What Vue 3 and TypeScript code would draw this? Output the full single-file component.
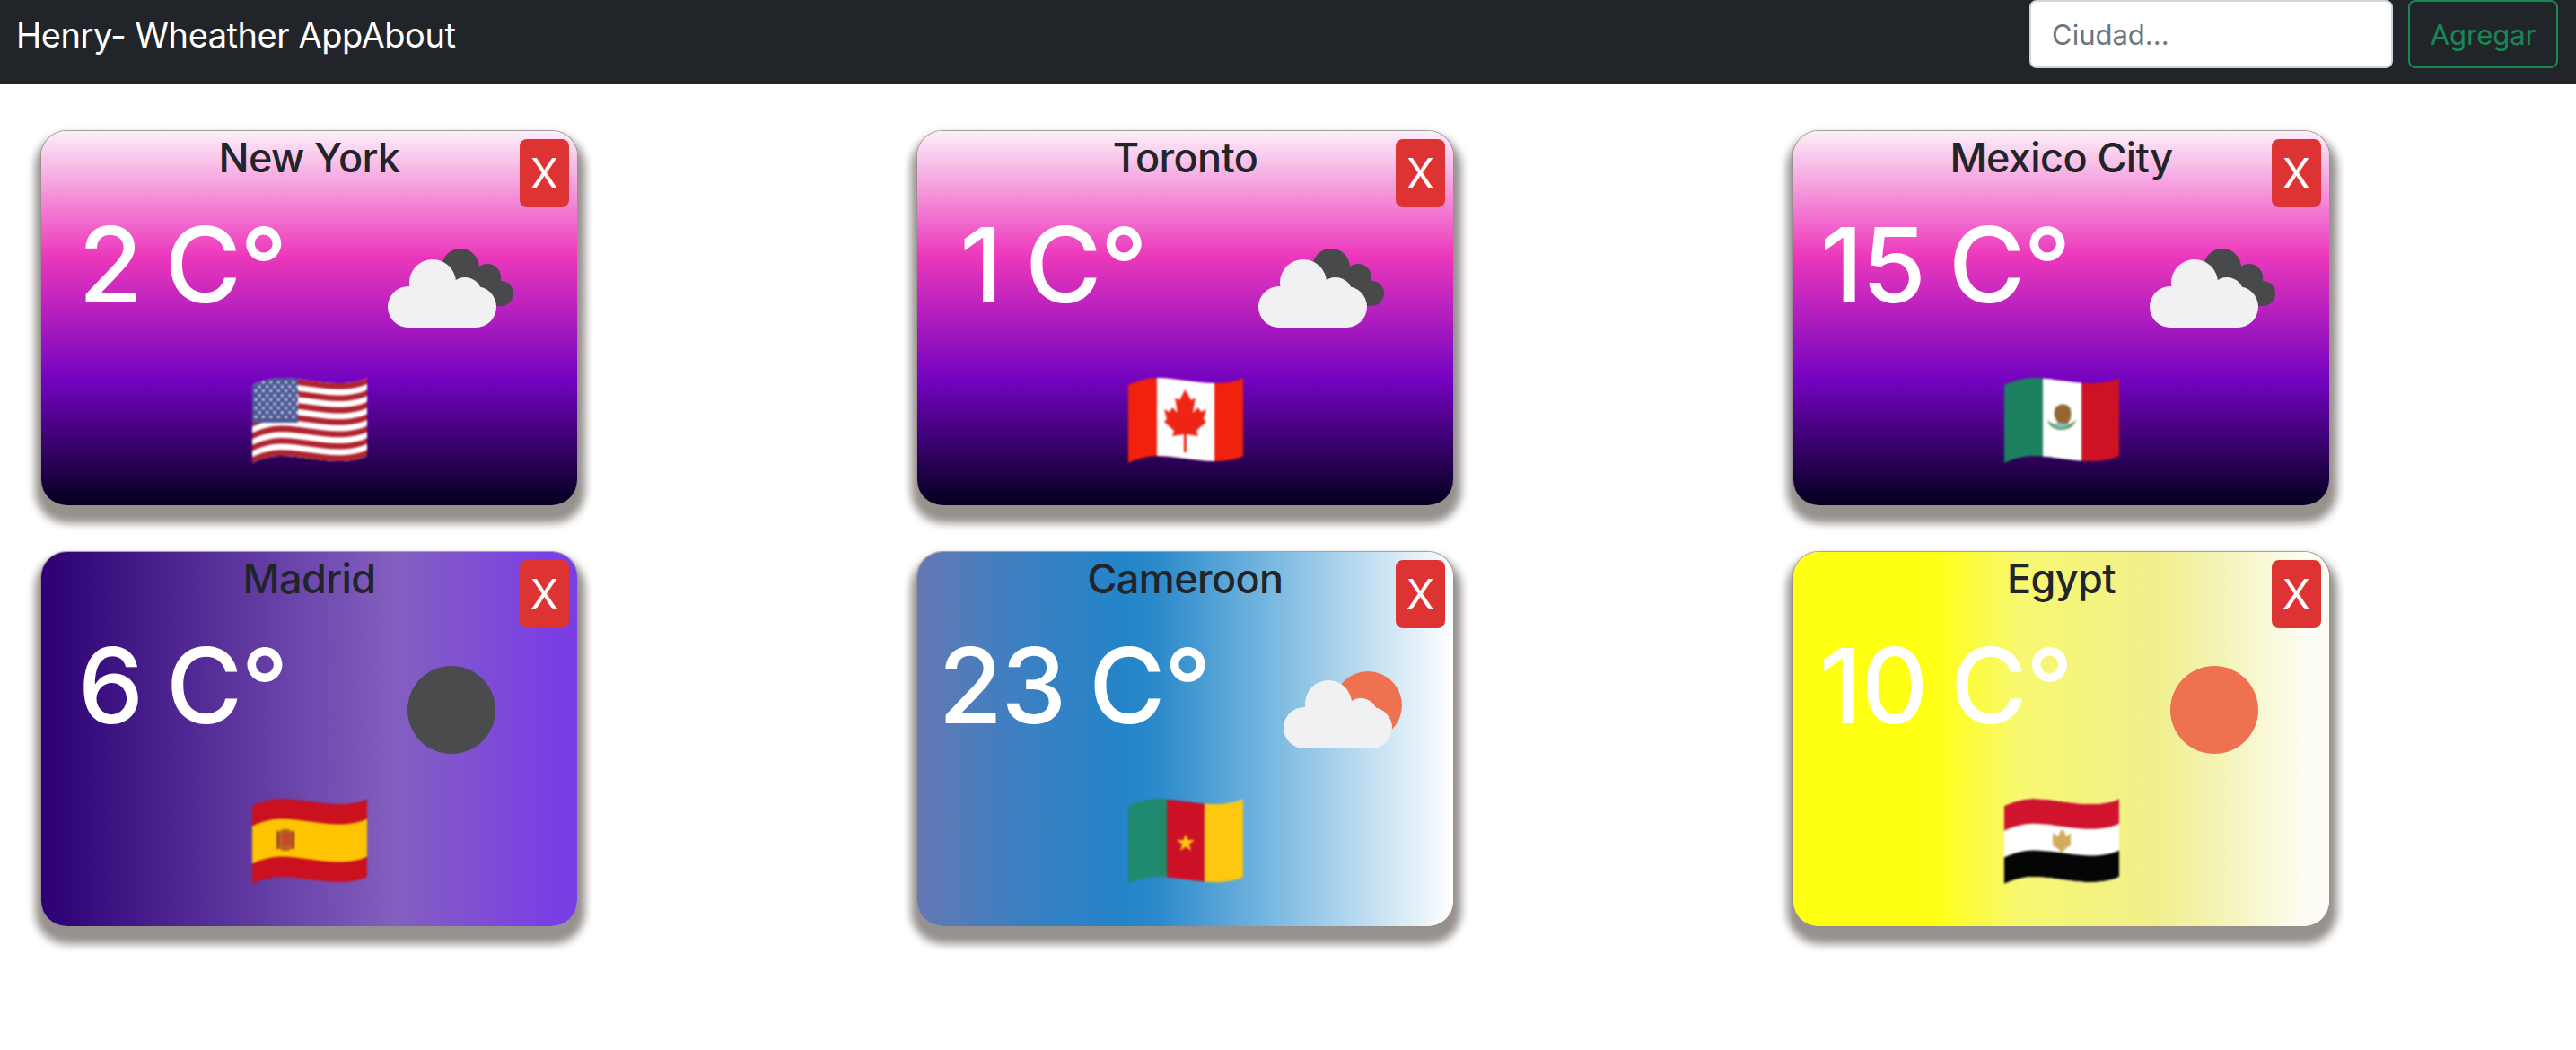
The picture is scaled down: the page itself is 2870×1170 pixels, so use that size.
<template>
  <div class="page">
    <nav class="navbar">
      <div class="brand">Henry- Wheather App<span>About</span></div>
      <form class="search" @submit.prevent>
        <input class="search-input" type="text" placeholder="Ciudad..." />
        <button class="search-btn" type="submit">Agregar</button>
      </form>
    </nav>

    <div class="cards">
      <div v-for="city in cities" :key="city.name" class="card" :class="city.theme">
        <button class="close-btn">X</button>
        <h2 class="card-title">{{ city.name }}</h2>
        <div class="card-row">
          <span class="temp">{{ city.temp }} C°</span>
          <svg class="weather" :viewBox="city.icon.startsWith('clouds') ? '-4 0 200 200' : '-1 0 200 200'" width="200" height="200">
            <template v-if="city.icon === 'clouds-night'">
              <circle cx="107" cy="76" r="21" fill="#48494b" />
              <circle cx="137" cy="87" r="15" fill="#48494b" />
              <circle cx="152" cy="105" r="14" fill="#48494b" />
              <rect x="107" y="84" width="45" height="35" fill="#48494b" />
            </template>
            <circle v-if="city.icon === 'clouds-day'" cx="125" cy="95" r="38" fill="#ee7150" />
            <g v-if="city.icon.startsWith('clouds')" :transform="city.icon === 'clouds-day' ? 'translate(5 0)' : ''" fill="#f1f1f3">
              <circle cx="76" cy="93" r="26" />
              <circle cx="112" cy="106" r="19" />
              <circle cx="49" cy="120" r="23" />
              <circle cx="124" cy="120" r="23" />
              <rect x="49" y="100" width="75" height="43" />
            </g>
            <circle v-if="city.icon === 'clear-night'" cx="100" cy="100" r="49" fill="#4a4b4d" />
            <circle v-if="city.icon === 'clear-day'" cx="100" cy="100" r="49" fill="#ee7150" />
          </svg>
        </div>
        <svg class="flag" viewBox="0 0 128 95" width="128" height="95">
          <clipPath :id="'wave-' + city.flag">
            <path :d="band(0, 1)" />
          </clipPath>
          <g :clip-path="'url(#wave-' + city.flag + ')'">
            <template v-if="city.flag === 'us'">
              <rect width="128" height="95" fill="#fff" />
              <path v-for="i in 7" :key="i" :d="band(((i - 1) * 2) / 13, ((i - 1) * 2 + 1) / 13)" fill="#b0232f" />
              <g>
                <rect width="51" height="50" fill="#4b5a96" />
                <circle v-for="s in stars" :key="s.x + '-' + s.y" :cx="s.x" :cy="s.y" r="1.5" fill="#e4e6f2" />
              </g>
            </template>
            <template v-else-if="city.flag === 'ca'">
              <rect width="128" height="95" fill="#f0220e" />
              <rect x="32" width="64" height="95" fill="#fff" />
              <polygon points="63.5,13 57,25 52,22 55,39 49,33 46,38 40,35 43,46 40,49 51,59 49,65 62,63 62,83 65,83 65,63 78,65 76,59 87,49 84,46 87,35 81,38 78,33 72,39 75,22 70,25" fill="#ee2414" />
            </template>
            <template v-else-if="city.flag === 'mx'">
              <rect width="43" height="95" fill="#1d8060" />
              <rect x="43" width="43" height="95" fill="#fff" />
              <rect x="86" width="42" height="95" fill="#cf1126" />
              <path d="M56 36 C58 28 72 27 74 36 C76 44 72 52 66 54 C60 52 54 44 56 36Z" fill="#96662f" />
              <path d="M48 46 C50 62 78 62 80 46 C76 55 52 55 48 46Z" fill="#5f9a62" />
              <ellipse cx="63" cy="53" rx="8" ry="3" fill="#7fb9c4" />
            </template>
            <template v-else-if="city.flag === 'es'">
              <rect width="128" height="95" fill="#cb1020" />
              <path :d="band(0.26, 0.74)" fill="#fec400" />
              <rect x="30" y="34" width="14" height="24" rx="5" fill="#b5651d" />
              <rect x="34" y="38" width="8" height="14" fill="#c8452c" />
              <rect x="27" y="36" width="3" height="20" fill="#a8452c" />
              <rect x="44" y="36" width="3" height="20" fill="#a8452c" />
            </template>
            <template v-else-if="city.flag === 'cm'">
              <rect width="43" height="95" fill="#1f8a6e" />
              <rect x="43" width="42" height="95" fill="#cc1126" />
              <rect x="85" width="43" height="95" fill="#fdc80f" />
              <polygon points="64,39 66.5,46 74,46 68,50.5 70,58 64,53.5 58,58 60,50.5 54,46 61.5,46" fill="#fdc80f" />
            </template>
            <template v-else>
              <rect width="128" height="95" fill="#fff" />
              <path :d="band(0, 0.32)" fill="#d0142e" />
              <path :d="band(0.66, 1)" fill="#050505" />
              <path d="M54 38 L60 42 L63 35 L66 35 L69 42 L74 38 L74 52 L69 55 L64 60 L59 55 L54 52Z" fill="#d2ab5e" />
            </template>
          </g>
        </svg>
      </div>
    </div>
  </div>
</template>

<script setup lang="ts">
interface City {
  name: string
  temp: number
  theme: string
  icon: string
  flag: string
}

const cities: City[] = [
  { name: 'New York', temp: 2, theme: 'night', icon: 'clouds-night', flag: 'us' },
  { name: 'Toronto', temp: 1, theme: 'night', icon: 'clouds-night', flag: 'ca' },
  { name: 'Mexico City', temp: 15, theme: 'night', icon: 'clouds-night', flag: 'mx' },
  { name: 'Madrid', temp: 6, theme: 'violet', icon: 'clear-night', flag: 'es' },
  { name: 'Cameroon', temp: 23, theme: 'blue', icon: 'clouds-day', flag: 'cm' },
  { name: 'Egypt', temp: 10, theme: 'yellow', icon: 'clear-day', flag: 'eg' }
]

// stars of the canton, offset every other row
const stars: { x: number; y: number }[] = []
for (let row = 0; row < 9; row++) {
  for (let col = 0; col < 6; col++) {
    stars.push({ x: 4 + col * 8.4 + (row % 2) * 4.2, y: 5 + row * 4.8 })
  }
}

// horizontal strip that follows the wave of the flag, a and b from 0 to 1
function band(a: number, b: number): string {
  const t = a * 87
  const u = b * 87
  return (
    `M0 ${t + 8} C10 ${t + 3} 22 ${t} 32 ${t} C54 ${t} 74 ${t + 6} 96 ${t + 6} C108 ${t + 6} 120 ${t + 4} 128 ${t} ` +
    `L128 ${u} C120 ${u + 4} 108 ${u + 6} 96 ${u + 6} C74 ${u + 6} 54 ${u} 32 ${u} C22 ${u} 10 ${u + 3} 0 ${u + 8} Z`
  )
}
</script>

<style>
html,
body {
  margin: 0;
  background: #fff;
}
</style>

<style scoped>
.page {
  min-height: 1170px;
  font-family: Inter, "Liberation Sans", sans-serif;
  color: #212529;
}

.navbar {
  display: flex;
  justify-content: space-between;
  align-items: flex-start;
  height: 94px;
  padding: 0 20px 0 18px;
  background: #212529;
}

.brand {
  color: #fff;
  font-size: 38px;
  letter-spacing: -0.45px;
  line-height: 78px;
}

.search {
  display: flex;
  gap: 17px;
}

.search-input {
  box-sizing: border-box;
  width: 405px;
  height: 76px;
  padding: 0 23px;
  border: 2px solid #ced4da;
  border-radius: 8px;
  background: #fff;
  font-family: inherit;
  font-size: 31px;
  color: #212529;
}

.search-input::placeholder {
  color: #6c757d;
  opacity: 1;
}

.search-btn {
  box-sizing: border-box;
  width: 167px;
  height: 76px;
  border: 2px solid #198754;
  border-radius: 8px;
  background: transparent;
  color: #198754;
  font-family: inherit;
  font-size: 31px;
}

.cards {
  display: grid;
  grid-template-columns: repeat(3, 597px);
  column-gap: 379px;
  row-gap: 52px;
  padding: 52px 0 0 46px;
}

.card {
  position: relative;
  box-sizing: border-box;
  height: 417px;
  border-radius: 28px;
  box-shadow: 1px 12px 10px 8px #96918d, 0 0 0 1px #a8a4a2;
}

.night {
  background: linear-gradient(to top, #03001e, #7303c0, #ec38bc, #fdeff9);
}

.violet {
  background: linear-gradient(to right, #2c0073, #8460c0 66%, #7a3fe4 95%);
}

.blue {
  background: linear-gradient(to right, #6478b4, #3a80c2 20%, #2484c8 38%, #2c8acb 45%, #78b8e0 66%, #fff);
}

.yellow {
  background: linear-gradient(to right, #ffff14 26%, #f8f870 42%, #f0ef8d 68%, #f4f4b8 80%, #fdfdf5 96%);
}

.close-btn {
  position: absolute;
  top: 9px;
  right: 9px;
  width: 55px;
  height: 76px;
  padding: 0;
  border: none;
  border-radius: 8px;
  background: #dd3333;
  color: #fff;
  font-family: inherit;
  font-size: 46px;
}

.card-title {
  height: 76px;
  margin: 0;
  font-size: 45px;
  font-weight: 500;
  letter-spacing: -0.6px;
  line-height: 60px;
  text-align: center;
}

.card-row {
  display: flex;
  justify-content: space-around;
  align-items: flex-start;
  height: 199px;
}

.temp {
  color: #fff;
  font-size: 116px;
  font-weight: 500;
  letter-spacing: -1.5px;
  word-spacing: -3px;
  line-height: 146px;
  white-space: nowrap;
}

.weather {
  display: block;
  flex: none;
}

.flag {
  display: block;
  margin: 0 auto;
  filter: blur(0.8px);
}
</style>
